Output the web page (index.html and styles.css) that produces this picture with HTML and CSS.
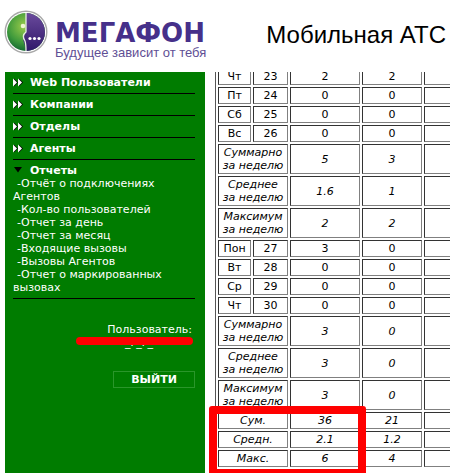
FILE: index.html
```html
<!DOCTYPE html>
<html lang="ru">
<head>
<meta charset="utf-8">
<title>Мобильная АТС</title>
<link rel="stylesheet" href="styles.css">
</head>
<body>
<header class="header">
  <div class="logo">
    <svg class="logo-mark" width="44" height="44" viewBox="0 0 44 44">
      <defs>
        <radialGradient id="g" cx="0.45" cy="0.35" r="0.7"><stop offset="0" stop-color="#9acb4a"/><stop offset="0.6" stop-color="#3f9a3c"/><stop offset="1" stop-color="#0b5f30"/></radialGradient>
        <linearGradient id="p" x1="0" y1="0" x2="0" y2="1"><stop offset="0" stop-color="#6a4a9c"/><stop offset="1" stop-color="#30186a"/></linearGradient>
      </defs>
      <circle cx="22" cy="22" r="20.8" fill="#fff" stroke="#a8a8a8" stroke-width="1.4"/>
      <circle cx="22" cy="22" r="19" fill="url(#g)"/>
      <path d="M22 3 A19 19 0 0 1 22 41 C22 36 19 32 19 28 L22 22 Z" fill="url(#p)"/>
      <path d="M22 3 V14 L22 22 C18 25 19 28 21 31 C22 34 22 38 22 41" fill="none" stroke="#e6efe0" stroke-width="1.3"/>
      <circle cx="19" cy="16" r="2.3" fill="#eef6d0"/>
      <circle cx="26" cy="28.5" r="1.6" fill="#fff"/><circle cx="30.5" cy="28.5" r="1.6" fill="#fff"/><circle cx="35" cy="28.5" r="1.6" fill="#fff"/>
    </svg>
    <div class="logo-text">
      <div class="logo-name">МЕГАФОН</div>
      <div class="logo-slogan">Будущее зависит от тебя</div>
    </div>
  </div>
  <h1 class="title">Мобильная АТС</h1>
</header>
<div class="main">
  <aside class="sidebar">
    <nav class="menu">
      <div class="menu-item"><svg class="arrows" width="10" height="9" viewBox="0 0 10 9"><path d="M1 0.5 L5 4.5 L1 8.5 Z M6 0.5 L10 4.5 L6 8.5 Z" fill="#000"/><path d="M0 0.5 L4 4.5 L0 8.5 Z M5 0.5 L9 4.5 L5 8.5 Z" fill="#fff"/></svg>Web Пользователи</div>
      <div class="menu-item"><svg class="arrows" width="10" height="9" viewBox="0 0 10 9"><path d="M1 0.5 L5 4.5 L1 8.5 Z M6 0.5 L10 4.5 L6 8.5 Z" fill="#000"/><path d="M0 0.5 L4 4.5 L0 8.5 Z M5 0.5 L9 4.5 L5 8.5 Z" fill="#fff"/></svg>Компании</div>
      <div class="menu-item"><svg class="arrows" width="10" height="9" viewBox="0 0 10 9"><path d="M1 0.5 L5 4.5 L1 8.5 Z M6 0.5 L10 4.5 L6 8.5 Z" fill="#000"/><path d="M0 0.5 L4 4.5 L0 8.5 Z M5 0.5 L9 4.5 L5 8.5 Z" fill="#fff"/></svg>Отделы</div>
      <div class="menu-item"><svg class="arrows" width="10" height="9" viewBox="0 0 10 9"><path d="M1 0.5 L5 4.5 L1 8.5 Z M6 0.5 L10 4.5 L6 8.5 Z" fill="#000"/><path d="M0 0.5 L4 4.5 L0 8.5 Z M5 0.5 L9 4.5 L5 8.5 Z" fill="#fff"/></svg>Агенты</div>
      <div class="menu-group">
        <div class="menu-head"><svg class="arrows" width="10" height="9" viewBox="0 0 10 9"><path d="M1 1 H9 L5 6.5 Z" fill="#000"/></svg>Отчеты</div>
        <div class="sub">-Отчёт о подключениях Агентов</div>
        <div class="sub">-Кол-во пользователей</div>
        <div class="sub">-Отчет за день</div>
        <div class="sub">-Отчет за месяц</div>
        <div class="sub">-Входящие вызовы</div>
        <div class="sub">-Вызовы Агентов</div>
        <div class="sub">-Отчет о маркированных вызовах</div>
      </div>
    </nav>
    <div class="user">
      <div class="user-label">Пользователь:</div>
      <div class="user-name">_г_г_</div>
      <div class="user-mark"></div>
    </div>
    <button class="logout" type="button">ВЫЙТИ</button>
  </aside>
  <section class="content">
    <div class="frame">
      <table class="report">
        <colgroup><col class="c1"><col class="c2"><col class="c3"><col class="c4"><col class="c5"></colgroup>
        <tr><td>Чт</td><td>23</td><td>2</td><td>2</td><td></td></tr>
        <tr><td>Пт</td><td>24</td><td>0</td><td>0</td><td></td></tr>
        <tr><td>Сб</td><td>25</td><td>0</td><td>0</td><td></td></tr>
        <tr><td>Вс</td><td>26</td><td>0</td><td>0</td><td></td></tr>
        <tr class="tall"><td colspan="2">Суммарно<br>за неделю</td><td>5</td><td>3</td><td></td></tr>
        <tr class="tall"><td colspan="2">Среднее<br>за неделю</td><td>1.6</td><td>1</td><td></td></tr>
        <tr class="tall"><td colspan="2">Максимум<br>за неделю</td><td>2</td><td>2</td><td></td></tr>
        <tr><td>Пон</td><td>27</td><td>3</td><td>0</td><td></td></tr>
        <tr><td>Вт</td><td>28</td><td>0</td><td>0</td><td></td></tr>
        <tr><td>Ср</td><td>29</td><td>0</td><td>0</td><td></td></tr>
        <tr><td>Чт</td><td>30</td><td>0</td><td>0</td><td></td></tr>
        <tr class="tall"><td colspan="2">Суммарно<br>за неделю</td><td>3</td><td>0</td><td></td></tr>
        <tr class="tall"><td colspan="2">Среднее<br>за неделю</td><td>3</td><td>0</td><td></td></tr>
        <tr class="tall"><td colspan="2">Максимум<br>за неделю</td><td>3</td><td>0</td><td></td></tr>
        <tr class="total"><td colspan="2">Сум.</td><td>36</td><td>21</td><td></td></tr>
        <tr class="total"><td colspan="2">Средн.</td><td>2.1</td><td>1.2</td><td></td></tr>
        <tr class="total"><td colspan="2">Макс.</td><td>6</td><td>4</td><td></td></tr>
      </table>
    </div>
    <div class="highlight"></div>
  </section>
</div>
</body>
</html>
```
FILE: styles.css
```css
html, body { margin: 0; padding: 0; }
body { width: 450px; height: 473px; overflow: hidden; background: #fff; font-family: "DejaVu Sans", Verdana, sans-serif; font-size: 11px; }

.header { height: 72px; display: flex; justify-content: space-between; box-sizing: border-box; padding: 10px 4px 0 4px; }
.logo { display: flex; }
.logo-mark { flex: none; }
.logo-text { margin-left: 7px; padding-top: 11px; font-family: "Liberation Sans", Arial, sans-serif; }
.logo-name { font: 700 26px/24px "DejaVu Sans", Verdana, sans-serif; color: #46308a; }
.logo-slogan { margin-top: 1px; font-size: 13px; line-height: 14px; color: #5f4f95; }
.title { margin: 10px 0 0; font: 400 24px/30px "Liberation Sans", Arial, sans-serif; color: #000; }

.main { display: flex; height: 401px; }
.sidebar { width: 200px; margin-left: 5px; background: #007c00; color: #fff; box-sizing: border-box; padding: 0 10px 0 8px; flex: none; }
.menu-item { height: 21px; border-bottom: 1px solid #000; display: flex; align-items: center; font-weight: 700; }
.arrows { margin-right: 7px; flex: none; }
.menu-group { height: 139px; border-bottom: 1px solid #000; padding-top: 3px; box-sizing: border-box; }
.menu-head { height: 14px; display: flex; align-items: center; font-weight: 700; }
.sub { line-height: 13px; text-indent: 4px; }
.user { position: relative; margin-top: 24px; text-align: right; padding-right: 3px; line-height: 13px; }
.user-name { height: 13px; margin-right: 39px; }
.user-mark { position: absolute; left: 63px; right: 2px; top: 14px; height: 8px; border-radius: 4px; background: #f00; }
.logout { display: block; box-sizing: border-box; width: 82px; height: 17px; margin: 22px 0 0 auto; padding: 1px 0 0; background: transparent; border: 1px solid #2a962a; color: #fff; font: 700 11px/14px "DejaVu Sans", Verdana, sans-serif; text-align: center; }

.content { position: relative; flex: 1; min-width: 0; overflow: hidden; }
.frame { margin-left: 10px; border-left: 1px solid #555; height: 401px; }
.report { margin-top: -6px; border-collapse: separate; border-spacing: 2px; table-layout: fixed; width: 250px; color: #000; }
.c1 { width: 33px; } .c2 { width: 35px; } .c3 { width: 70px; } .c4 { width: 60px; } .c5 { width: 40px; }
.report td { box-sizing: border-box; height: 17px; padding: 0; text-align: center; vertical-align: middle; line-height: 13px; border: 1px solid; border-color: #333 #808080 #808080 #333; }
.tall td { height: 30px; font-style: italic; }
.total td { font-style: italic; }
.highlight { position: absolute; left: 4px; top: 334px; width: 141px; height: 55px; border: 8px solid #f00; border-radius: 3px; }
```
